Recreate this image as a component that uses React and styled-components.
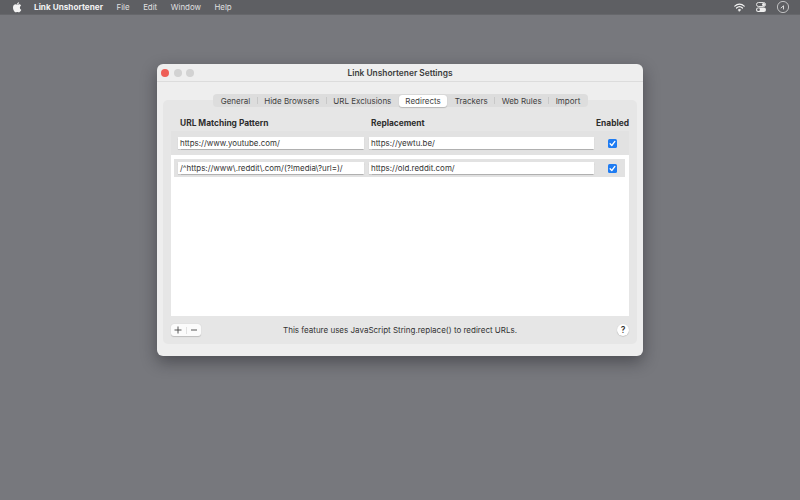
import React from 'react';
import styled, { createGlobalStyle } from 'styled-components';

const GlobalStyle = createGlobalStyle`
  html, body {
    margin: 0;
    height: 100%;
    overflow: hidden;
    background: #77787d;
    font-family: "Inter", "Liberation Sans", sans-serif;
  }
`;

const Desktop = styled.div`
  width: 800px;
  height: 500px;
  background: #77787d;
  display: flex;
  flex-direction: column;
`;

const MenuBar = styled.div`
  height: 14px;
  flex: none;
  background: #5e5f63;
  display: flex;
  align-items: center;
  padding: 0 11px 0 13px;
  color: #f1f1f2;
  border-bottom: 1px solid #66676b;
`;

const AppleIcon = styled.svg`
  width: 9px;
  height: 11px;
  margin-right: 12px;
  fill: #f4f4f4;
`;

const MenuItem = styled.span`
  margin-right: 13.5px;
  font-size: ${props => (props.$bold ? '8.2px' : '7.9px')};
  font-weight: ${props => (props.$bold ? 700 : 400)};
  opacity: ${props => (props.$bold ? 1 : 0.88)};
`;

const MenuStatus = styled.div`
  margin-left: auto;
  display: flex;
  align-items: center;
  gap: 11px;
`;

const WindowFrame = styled.div`
  width: 486px;
  height: 292px;
  margin: 49px 0 0 157px;
  background: #eeeeee;
  border-radius: 6px;
  box-shadow: 0 6px 16px rgba(25, 25, 30, 0.45);
  display: flex;
  flex-direction: column;
  overflow: hidden;
`;

const TitleBar = styled.div`
  height: 17px;
  flex: none;
  display: flex;
  align-items: center;
  justify-content: center;
  position: relative;
  border-bottom: 1px solid #dcdcdc;
  font-size: 8.4px;
  font-weight: 600;
  color: #3c3c3c;
`;

const Lights = styled.div`
  position: absolute;
  left: 4px;
  top: 5px;
  display: flex;
  gap: 4.5px;
`;

const Light = styled.span`
  width: 8px;
  height: 8px;
  border-radius: 50%;
  background: ${props => props.$color};
`;

const Body = styled.div`
  flex: 1;
  display: flex;
  flex-direction: column;
  padding: 18px 6px 12px;
`;

const Panel = styled.div`
  flex: 1;
  background: #e6e6e6;
  border-radius: 5px;
  display: flex;
  flex-direction: column;
  padding: 0 8px;
`;

const TabBar = styled.div`
  align-self: center;
  height: 13px;
  margin-top: -6px;
  margin-left: 1px;
  padding: 0 1px;
  background: #dddddd;
  border-radius: 4px;
  display: flex;
  align-items: center;
  font-size: 8px;
  color: #3f3f3f;
`;

const Tab = styled.div`
  height: 12px;
  padding: 0 6.5px;
  display: flex;
  align-items: center;
  background: ${props => (props.$active ? '#fff' : 'transparent')};
  border-radius: 3px;
  box-shadow: ${props => (props.$active ? '0 0.5px 1px rgba(0,0,0,0.2)' : 'none')};
`;

const TabDivider = styled.span`
  width: 1px;
  height: 7px;
  background: ${props => (props.$hidden ? 'transparent' : '#c8c8c8')};
`;

const Columns = styled.div`
  height: 24px;
  box-sizing: border-box;
  padding: 7px 0 0 9px;
  display: grid;
  grid-template-columns: 191px 1fr auto;
  align-items: center;
  font-size: 8.4px;
  font-weight: 700;
  color: #2e2e2e;
`;

const List = styled.div`
  flex: 1;
  background: #fff;
  display: flex;
  flex-direction: column;
`;

const Row = styled.div`
  display: grid;
  grid-template-columns: 186px 225px 26px;
  column-gap: 5px;
  align-items: center;
  height: ${props => (props.$inset ? '18px' : '24px')};
  margin: ${props => (props.$inset ? '4px 4px 0 3px' : '0')};
  padding-left: ${props => (props.$inset ? '4px' : '7px')};
  background: #e2e2e2;
`;

const UrlField = styled.div`
  height: 12px;
  background: #fff;
  box-shadow: 0 0.5px 1px rgba(0, 0, 0, 0.22);
  display: flex;
  align-items: center;
  padding: 0 2px;
  font-size: 7.95px;
  color: #333;
  white-space: nowrap;
  overflow: hidden;
`;

const CheckCell = styled.div`
  display: flex;
  justify-content: center;
`;

const Check = styled.svg`
  width: 9px;
  height: 9px;
`;

const Footer = styled.div`
  height: 28px;
  flex: none;
  display: grid;
  grid-template-columns: 1fr auto 1fr;
  align-items: center;
`;

const StepperGroup = styled.div`
  width: 30px;
  height: 12px;
  background: #fbfbfb;
  border-radius: 3px;
  box-shadow: 0 0.5px 1px rgba(0, 0, 0, 0.18);
  display: flex;
  align-items: center;
`;

const StepperButton = styled.span`
  flex: 1;
  display: flex;
  align-items: center;
  justify-content: center;
  height: 12px;
  color: #444;
`;

const StepperDivider = styled.span`
  width: 1px;
  height: 7px;
  background: #e2e2e2;
`;

const Note = styled.div`
  font-size: 8px;
  color: #333;
`;

const HelpButton = styled.div`
  justify-self: end;
  width: 12px;
  height: 12px;
  border-radius: 50%;
  background: #fff;
  box-shadow: 0 0.5px 1px rgba(0, 0, 0, 0.25);
  display: flex;
  align-items: center;
  justify-content: center;
  font-size: 8.6px;
  font-weight: 600;
  color: #3a3a3a;
`;

const tabs = ['General', 'Hide Browsers', 'URL Exclusions', 'Redirects', 'Trackers', 'Web Rules', 'Import'];

const rules = [
  { pattern: 'https://www.youtube.com/', replacement: 'https://yewtu.be/' },
  { pattern: '/^https://www\\.reddit\\.com/(?!media\\?url=)/', replacement: 'https://old.reddit.com/', inset: true },
];

const CheckBox = () => (
  <Check viewBox="0 0 9 9">
    <rect width="9" height="9" rx="1.6" fill="#1f7cf2" />
    <path d="M2.1 4.7 L3.8 6.5 L6.9 2.4" fill="none" stroke="#fff" strokeWidth="1.3" strokeLinecap="round" strokeLinejoin="round" />
  </Check>
);

const App = () => {
  const activeIndex = tabs.indexOf('Redirects');
  return (
    <Desktop>
      <GlobalStyle />
      <MenuBar>
        <AppleIcon viewBox="0 0 170 200">
          <path d="M150 67c-1 1-20 12-20 36 0 28 25 38 26 38 0 1-4 14-13 27-8 12-17 24-30 24s-16-8-31-8c-15 0-20 8-32 8s-20-11-30-25C9 151 0 125 0 100c0-40 26-61 51-61 14 0 25 9 33 9 8 0 21-10 37-10 6 0 27 1 29 29zM104 30c6-7 11-17 11-27 0-1 0-3-1-3-10 0-21 6-27 14-6 6-11 16-11 26 0 2 0 3 1 3 9 1 21-5 27-13z" />
        </AppleIcon>
        <MenuItem $bold>Link Unshortener</MenuItem>
        <MenuItem>File</MenuItem>
        <MenuItem>Edit</MenuItem>
        <MenuItem>Window</MenuItem>
        <MenuItem>Help</MenuItem>
        <MenuStatus>
          <svg width="11" height="9" viewBox="0 0 11 9" fill="none" stroke="#f4f4f4" strokeLinecap="round">
            <path d="M0.8 3.2 C3.6 0.4 7.4 0.4 10.2 3.2" strokeWidth="1.2" />
            <path d="M2.5 5 C4.3 3.3 6.7 3.3 8.5 5" strokeWidth="1.2" />
            <path d="M4.3 6.8 C5 6.2 6 6.2 6.7 6.8 L5.5 8.2 Z" fill="#f4f4f4" strokeWidth="0.6" />
          </svg>
          <svg width="10" height="10" viewBox="0 0 10 10">
            <rect x="0.5" y="0.5" width="9" height="4" rx="2" fill="none" stroke="#eee" strokeWidth="0.9" />
            <circle cx="7.5" cy="2.5" r="1.5" fill="#eee" />
            <rect x="0" y="5.5" width="10" height="4.5" rx="2.2" fill="#eee" />
            <circle cx="2.5" cy="7.7" r="1.4" fill="#5e5f63" />
          </svg>
          <svg width="12" height="12" viewBox="0 0 12 12" fill="none" stroke="#e8e8e8">
            <circle cx="6" cy="6" r="5.6" strokeWidth="0.7" />
            <path d="M3.8 7.2 L6.5 4.8 L6.5 8.4" strokeWidth="0.9" />
          </svg>
        </MenuStatus>
      </MenuBar>
      <WindowFrame>
        <TitleBar>
          <Lights>
            <Light $color="#ee5e57" />
            <Light $color="#d2d2d2" />
            <Light $color="#d2d2d2" />
          </Lights>
          Link Unshortener Settings
        </TitleBar>
        <Body>
          <Panel>
            <TabBar>
              {tabs.map((tab, i) => (
                <React.Fragment key={tab}>
                  {i > 0 && <TabDivider $hidden={i === activeIndex || i === activeIndex + 1} />}
                  <Tab $active={i === activeIndex}>{tab}</Tab>
                </React.Fragment>
              ))}
            </TabBar>
            <Columns>
              <span>URL Matching Pattern</span>
              <span>Replacement</span>
              <span>Enabled</span>
            </Columns>
            <List>
              {rules.map(rule => (
                <Row key={rule.pattern} $inset={rule.inset}>
                  <UrlField>{rule.pattern}</UrlField>
                  <UrlField>{rule.replacement}</UrlField>
                  <CheckCell>
                    <CheckBox />
                  </CheckCell>
                </Row>
              ))}
            </List>
            <Footer>
              <StepperGroup>
                <StepperButton>
                  <svg width="8" height="8" viewBox="0 0 8 8" stroke="currentColor" strokeWidth="0.9">
                    <path d="M4 0.5V7.5M0.5 4H7.5" />
                  </svg>
                </StepperButton>
                <StepperDivider />
                <StepperButton>
                  <svg width="8" height="8" viewBox="0 0 8 8" stroke="currentColor" strokeWidth="0.9">
                    <path d="M1 4H7" />
                  </svg>
                </StepperButton>
              </StepperGroup>
              <Note>This feature uses JavaScript String.replace() to redirect URLs.</Note>
              <HelpButton>?</HelpButton>
            </Footer>
          </Panel>
        </Body>
      </WindowFrame>
    </Desktop>
  );
};

export default App;
